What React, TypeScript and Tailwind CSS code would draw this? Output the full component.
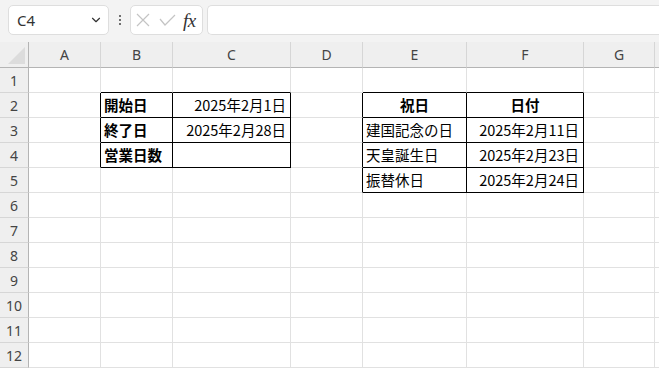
import { ChevronDown } from "lucide-react"

type Cell = { text: string; bold?: boolean; align?: "left" | "right" | "center" }

const COLS = ["A", "B", "C", "D", "E", "F", "G", ""]
const ROWS = [1, 2, 3, 4, 5, 6, 7, 8, 9, 10, 11, 12]

const DATA: Record<string, Cell> = {
  B2: { text: "開始日", bold: true },
  C2: { text: "2025年2月1日", align: "right" },
  B3: { text: "終了日", bold: true },
  C3: { text: "2025年2月28日", align: "right" },
  B4: { text: "営業日数", bold: true },
  E2: { text: "祝日", bold: true, align: "center" },
  F2: { text: "日付", bold: true, align: "center" },
  E3: { text: "建国記念の日" },
  F3: { text: "2025年2月11日", align: "right" },
  E4: { text: "天皇誕生日" },
  F4: { text: "2025年2月23日", align: "right" },
  E5: { text: "振替休日" },
  F5: { text: "2025年2月24日", align: "right" },
}

// cells that get the thin black table border
const bordered = (r: number, c: number) => {
  if (r >= 2 && r <= 4 && (c === 1 || c === 2)) return true
  if (r >= 2 && r <= 5 && (c === 4 || c === 5)) return true
  return false
}

function GridCell({ r, c }: { r: number; c: number }) {
  const cell = DATA[`${COLS[c]}${r}`]
  const rightBlack = bordered(r, c) || bordered(r, c + 1)
  const bottomBlack = bordered(r, c) || bordered(r + 1, c)
  const align =
    cell?.align === "right"
      ? "justify-end pr-1"
      : cell?.align === "center"
        ? "justify-center"
        : "justify-start pl-[3px]"
  return (
    <div
      className={`h-[25px] flex items-center border-r border-b overflow-visible whitespace-nowrap ${
        rightBlack ? "border-r-black" : "border-r-[#e1e1e1]"
      } ${bottomBlack ? "border-b-black" : "border-b-[#e1e1e1]"} ${align}`}
    >
      {cell && (
        <span className={`text-[14.5px] leading-none text-black ${cell.bold ? "font-bold" : ""}`}>
          {cell.text}
        </span>
      )}
    </div>
  )
}

function Toolbar() {
  return (
    <div className="h-[42px] bg-[#f3f3f3] flex items-start pt-[5px]">
      {/* Name box */}
      <div className="ml-2 w-[101px] h-[30px] bg-white border border-[#dedede] rounded-[5px] flex items-center justify-between pl-2 pr-[5px]">
        <span className="text-[15px] text-[#333] font-['Noto_Sans',sans-serif]">C4</span>
        <ChevronDown className="w-[14px] h-[14px] text-[#333]" strokeWidth={2} />
      </div>
      {/* divider dots */}
      <div className="w-[21px] h-[30px] flex flex-col items-center justify-center gap-[2px]">
        <span className="w-[2px] h-[2px] bg-[#444] rounded-full" />
        <span className="w-[2px] h-[2px] bg-[#444] rounded-full" />
        <span className="w-[2px] h-[2px] bg-[#444] rounded-full" />
      </div>
      {/* cancel / enter / fx */}
      <div className="w-[73px] h-[30px] bg-white border border-[#dedede] rounded-[5px] flex items-center pl-[5px]">
        <svg width="14" height="14" viewBox="0 0 14 14">
          <path d="M1 1 L13 13 M13 1 L1 13" stroke="#c4c4c4" strokeWidth="1.2" fill="none" />
        </svg>
        <svg width="17" height="12" viewBox="0 0 17 12" className="ml-[9px]">
          <path d="M1 5 L6 11 L16 1" stroke="#c4c4c4" strokeWidth="1.2" fill="none" />
        </svg>
        <span className="ml-[7px] text-[19px] italic text-[#333] font-['Liberation_Serif',serif] leading-none tracking-[-0.5px]">
          fx
        </span>
      </div>
      {/* formula input */}
      <div className="ml-[4px] flex-1 h-[30px] bg-white border border-[#dedede] rounded-l-[5px] border-r-0" />
    </div>
  )
}

export default function App() {
  return (
    <div className="w-[659px] h-[368px] overflow-hidden bg-white font-['Noto_Sans_CJK_JP','Noto_Sans',sans-serif]">
      <Toolbar />
      <div className="grid grid-cols-[29px_72px_72px_118px_72px_104px_117px_71px_5px]">
        {/* header row */}
        <div className="h-[26px] bg-[#efefef] border-r border-b border-r-[#b4b4b4] border-b-[#b4b4b4] flex items-end justify-end pb-[3px] pr-[3px]">
          <svg width="17" height="17" viewBox="0 0 17 17">
            <path d="M17 0 L17 17 L0 17 Z" fill="#dcdcdc" />
          </svg>
        </div>
        {COLS.map((c, i) => (
          <div
            key={i}
            className="h-[26px] bg-[#efefef] border-b border-b-[#b4b4b4] border-r border-r-[#d6d6d6] flex items-center justify-center font-['Noto_Sans',sans-serif] text-[14px] text-[#444]"
          >
            {c}
          </div>
        ))}
        {ROWS.map((r) => (
          <div key={r} className="contents">
            <div className="h-[25px] bg-[#efefef] border-r border-b border-r-[#b4b4b4] border-b-[#d6d6d6] flex items-center justify-center font-['Noto_Sans',sans-serif] text-[14px] text-[#444]">
              {r}
            </div>
            {COLS.map((_, c) => (
              <GridCell key={c} r={r} c={c} />
            ))}
          </div>
        ))}
      </div>
    </div>
  )
}
